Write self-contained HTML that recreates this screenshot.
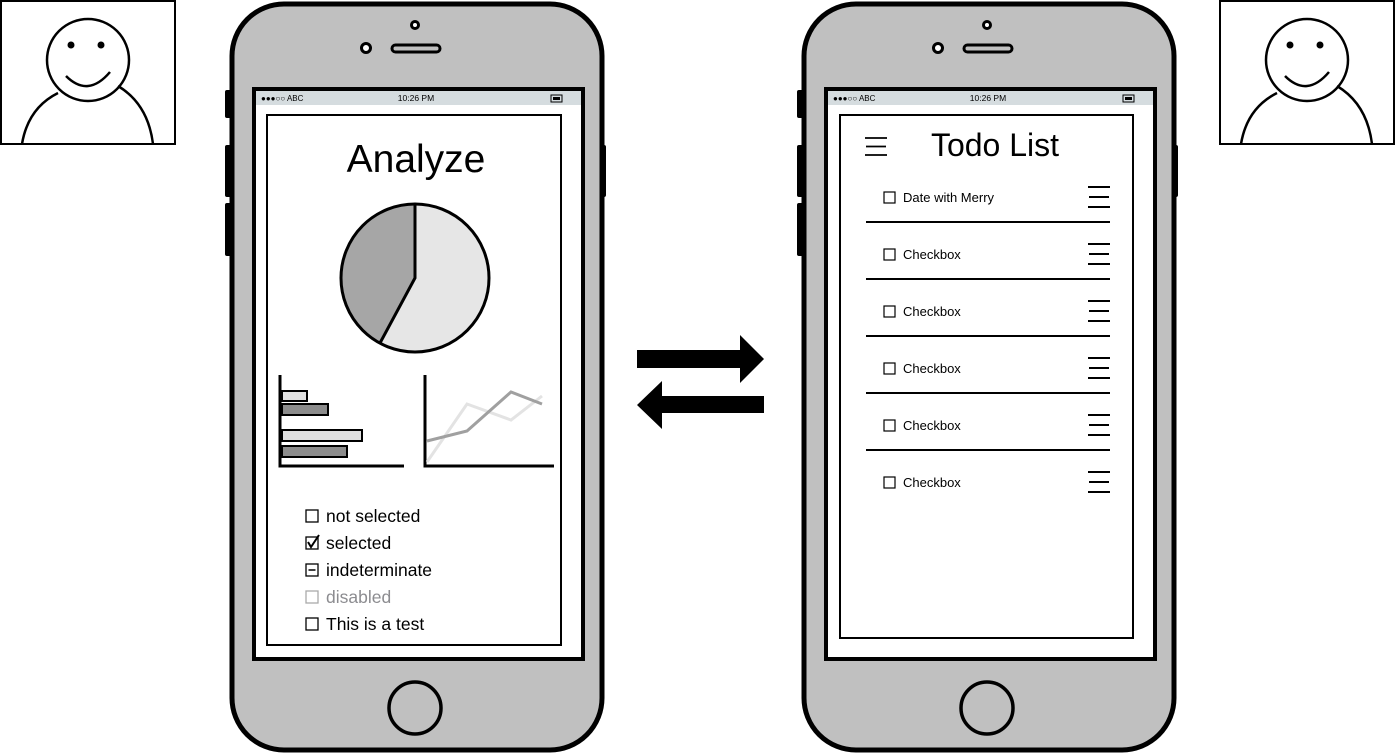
<!DOCTYPE html>
<html><head><style>
html,body{margin:0;padding:0;background:#fff;width:1395px;height:754px;overflow:hidden}
text{font-family:"Liberation Sans",sans-serif}
</style></head><body>
<svg width="1395" height="754" viewBox="0 0 1395 754" xmlns="http://www.w3.org/2000/svg">
<defs>
<g id="avatar">
<rect x="1" y="1" width="174" height="143" fill="#fff" stroke="#000" stroke-width="2"/>
<circle cx="88" cy="60" r="41" fill="#fff" stroke="#000" stroke-width="2.5"/>
<circle cx="71" cy="45" r="3.5"/><circle cx="101" cy="45" r="3.5"/>
<path d="M66 76 Q88 98 110 72" fill="none" stroke="#000" stroke-width="2.5"/>
<path d="M22 144 Q28 108 58 93 M118 86 Q148 104 153 144" fill="none" stroke="#000" stroke-width="2.5"/>
</g>
<g id="phone">
<rect x="225" y="90" width="8" height="28" rx="2"/>
<rect x="225" y="145" width="8" height="52" rx="2"/>
<rect x="225" y="203" width="8" height="53" rx="2"/>
<rect x="598" y="145" width="8" height="52" rx="2"/>
<rect x="232" y="4" width="370" height="746" rx="52" fill="#c0c0c0" stroke="#000" stroke-width="5"/>
<circle cx="415" cy="25" r="3.5" fill="#fff" stroke="#000" stroke-width="3"/>
<circle cx="366" cy="48" r="4.5" fill="#fff" stroke="#000" stroke-width="3"/>
<rect x="392" y="45" width="48" height="7" rx="3.5" fill="#c0c0c0" stroke="#000" stroke-width="3"/>
<rect x="254" y="89" width="329" height="570" fill="#fff" stroke="#000" stroke-width="4"/>
<rect x="256" y="91" width="325" height="14" fill="#d5dcdf"/>
<text x="261" y="101" font-size="8">●●●○○ ABC</text>
<text x="416" y="101" font-size="8.5" text-anchor="middle">10:26 PM</text>
<rect x="551" y="95" width="11" height="7" fill="none" stroke="#000" stroke-width="1"/>
<rect x="553" y="97" width="7" height="3"/>
<circle cx="415" cy="708" r="26" fill="#c0c0c0" stroke="#000" stroke-width="3.5"/>
</g>
<g id="ham"><path d="M0 0 H22 M1 10 H21 M0 20 H22" stroke="#000" stroke-width="2" fill="none"/></g>
</defs>

<use href="#avatar"/>
<use href="#avatar" x="1219"/>

<use href="#phone"/>
<use href="#phone" x="572"/>

<rect x="267" y="115" width="294" height="530" fill="#fff" stroke="#000" stroke-width="2"/>
<text x="416" y="172" font-size="39" text-anchor="middle">Analyze</text>
<circle cx="415" cy="278" r="74" fill="#e6e6e6"/>
<path d="M415 278 L415 204 A74 74 0 0 0 380 343 Z" fill="#a6a6a6"/>
<circle cx="415" cy="278" r="74" fill="none" stroke="#000" stroke-width="3"/>
<path d="M415 204 L415 278 L380 343" fill="none" stroke="#000" stroke-width="3"/>
<path d="M280 375 V466 H404" fill="none" stroke="#000" stroke-width="3"/>
<g stroke="#000" stroke-width="2">
<rect x="282" y="391" width="25" height="10" fill="#e0e0e0"/>
<rect x="282" y="404" width="46" height="11" fill="#8c8c8c"/>
<rect x="282" y="430" width="80" height="11" fill="#e0e0e0"/>
<rect x="282" y="446" width="65" height="11" fill="#8c8c8c"/>
</g>
<path d="M425 375 V466 H554" fill="none" stroke="#000" stroke-width="3"/>
<polyline points="427,462 467,404 511,420 542,396" fill="none" stroke="#e3e3e3" stroke-width="3"/>
<polyline points="427,441 467,431 511,392 542,404" fill="none" stroke="#a0a0a0" stroke-width="3"/>
<g font-size="17.5">
<rect x="306" y="510" width="12" height="12" fill="none" stroke="#000" stroke-width="1.3"/>
<text x="326" y="522">not selected</text>
<rect x="306" y="537" width="12" height="12" fill="none" stroke="#000" stroke-width="1.3"/>
<path d="M308 542 L311 547 L319 535" fill="none" stroke="#000" stroke-width="2"/>
<text x="326" y="549">selected</text>
<rect x="306" y="564" width="12" height="12" fill="none" stroke="#000" stroke-width="1.3"/>
<path d="M308.5 570 H315.5" stroke="#000" stroke-width="1.5"/>
<text x="326" y="576">indeterminate</text>
<rect x="306" y="591" width="12" height="12" fill="none" stroke="#aaa" stroke-width="1.3"/>
<text x="326" y="603" fill="#8c8c90">disabled</text>
<rect x="306" y="618" width="12" height="12" fill="none" stroke="#000" stroke-width="1.3"/>
<text x="326" y="630">This is a test</text>
</g>

<polygon points="637,350 740,350 740,335 764,359 740,383 740,368 637,368"/>
<polygon points="764,396 662,396 662,381 637,405 662,429 662,413 764,413"/>

<rect x="840" y="115" width="293" height="523" fill="#fff" stroke="#000" stroke-width="2"/>
<use href="#ham" transform="translate(865,138) scale(1,0.85)"/>
<text x="995" y="156" font-size="32" text-anchor="middle">Todo List</text>
<g font-size="13">
<g id="row">
<rect x="884" y="192" width="11" height="11" fill="none" stroke="#000" stroke-width="1.2"/>
<use href="#ham" transform="translate(1088,187)"/>
<path d="M866 222 H1110" stroke="#000" stroke-width="2"/>
</g>
<text x="903" y="202">Date with Merry</text>
<use href="#row" y="57"/><text x="903" y="259">Checkbox</text>
<use href="#row" y="114"/><text x="903" y="316">Checkbox</text>
<use href="#row" y="171"/><text x="903" y="373">Checkbox</text>
<use href="#row" y="228"/><text x="903" y="430">Checkbox</text>
<rect x="884" y="477" width="11" height="11" fill="none" stroke="#000" stroke-width="1.2"/>
<use href="#ham" transform="translate(1088,472)"/>
<text x="903" y="487">Checkbox</text>
</g>
</svg>
</body></html>
